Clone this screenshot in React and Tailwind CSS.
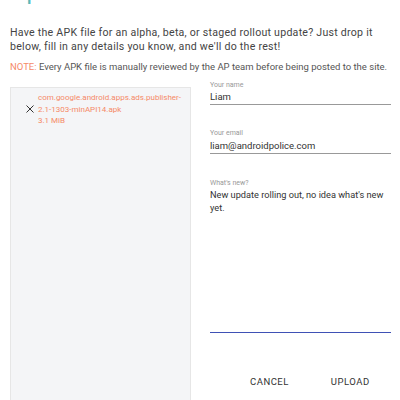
export default function App() {
  return (
    <div className="w-[400px] h-[400px] overflow-hidden bg-white" style={{ fontFamily: "Roboto, 'Liberation Sans', sans-serif" }}>
      <div className="h-[6px] overflow-hidden relative">
        <div className="absolute left-[10px] top-[-23px] text-[24px] leading-[28px] text-[#5bb8b8] whitespace-nowrap tracking-[1px]">Upload an APK</div>
      </div>
      <p className="mx-[10px] mt-[20px] text-[10.6px] leading-[14px] text-[#444] tracking-[0.25px]">
        Have the APK file for an alpha, beta, or staged rollout update? Just drop it below, fill in any details you know, and we'll do the rest!
      </p>
      <p className="mx-[10px] mt-[6px] text-[9.5px] leading-[14px] text-[#555] whitespace-nowrap">
        <span className="text-[#f58a68]">NOTE:</span> Every APK file is manually reviewed by the AP team before being posted to the site.
      </p>
      <div className="flex pl-[10px] gap-[19px] mt-[13px]">
        <div className="w-[181px] h-[330px] shrink-0 bg-[#f4f5f7] border border-[#e6e6e6] border-b-0 flex pt-[4px]">
          <div className="w-[27px] shrink-0 flex justify-end pt-[13px] pr-[4px]">
            <svg width="8" height="8" viewBox="0 0 8 8"><path d="M0.5 0.5L7.5 7.5M7.5 0.5L0.5 7.5" stroke="#333" strokeWidth="1" /></svg>
          </div>
          <div className="text-[8px] leading-[11.7px] text-[#f58a68] whitespace-nowrap">
            <div>com.google.android.apps.ads.publisher-</div>
            <div>2.1-1303-minAPI14.apk</div>
            <div>3.1 MiB</div>
          </div>
        </div>
        <div className="w-[181px] shrink-0 flex flex-col -mt-[6px]">
          <div className="text-[7px] leading-[9px] text-[#999]">Your name</div>
          <div className="text-[9.5px] leading-[14px] text-[#333] border-b border-[#999]">Liam</div>
          <div className="text-[7px] leading-[10px] text-[#999] mt-[23px]">Your email</div>
          <div className="text-[9.5px] leading-[14px] text-[#333] border-b border-[#999] mt-[1px]">liam@androidpolice.com</div>
          <div className="text-[7px] leading-[10px] text-[#999] mt-[24px]">What's new?</div>
          <div className="text-[9.2px] leading-[13px] text-[#333] h-[145px] border-b-[1.5px] border-[#3f51b5]">New update rolling out, no idea what's new yet.</div>
          <div className="flex mt-[42px] text-[9.5px] leading-[14px] tracking-[0.5px] text-[#333]">
            <span className="ml-[40px]">CANCEL</span>
            <span className="ml-[42px]">UPLOAD</span>
          </div>
        </div>
      </div>
    </div>
  );
}
